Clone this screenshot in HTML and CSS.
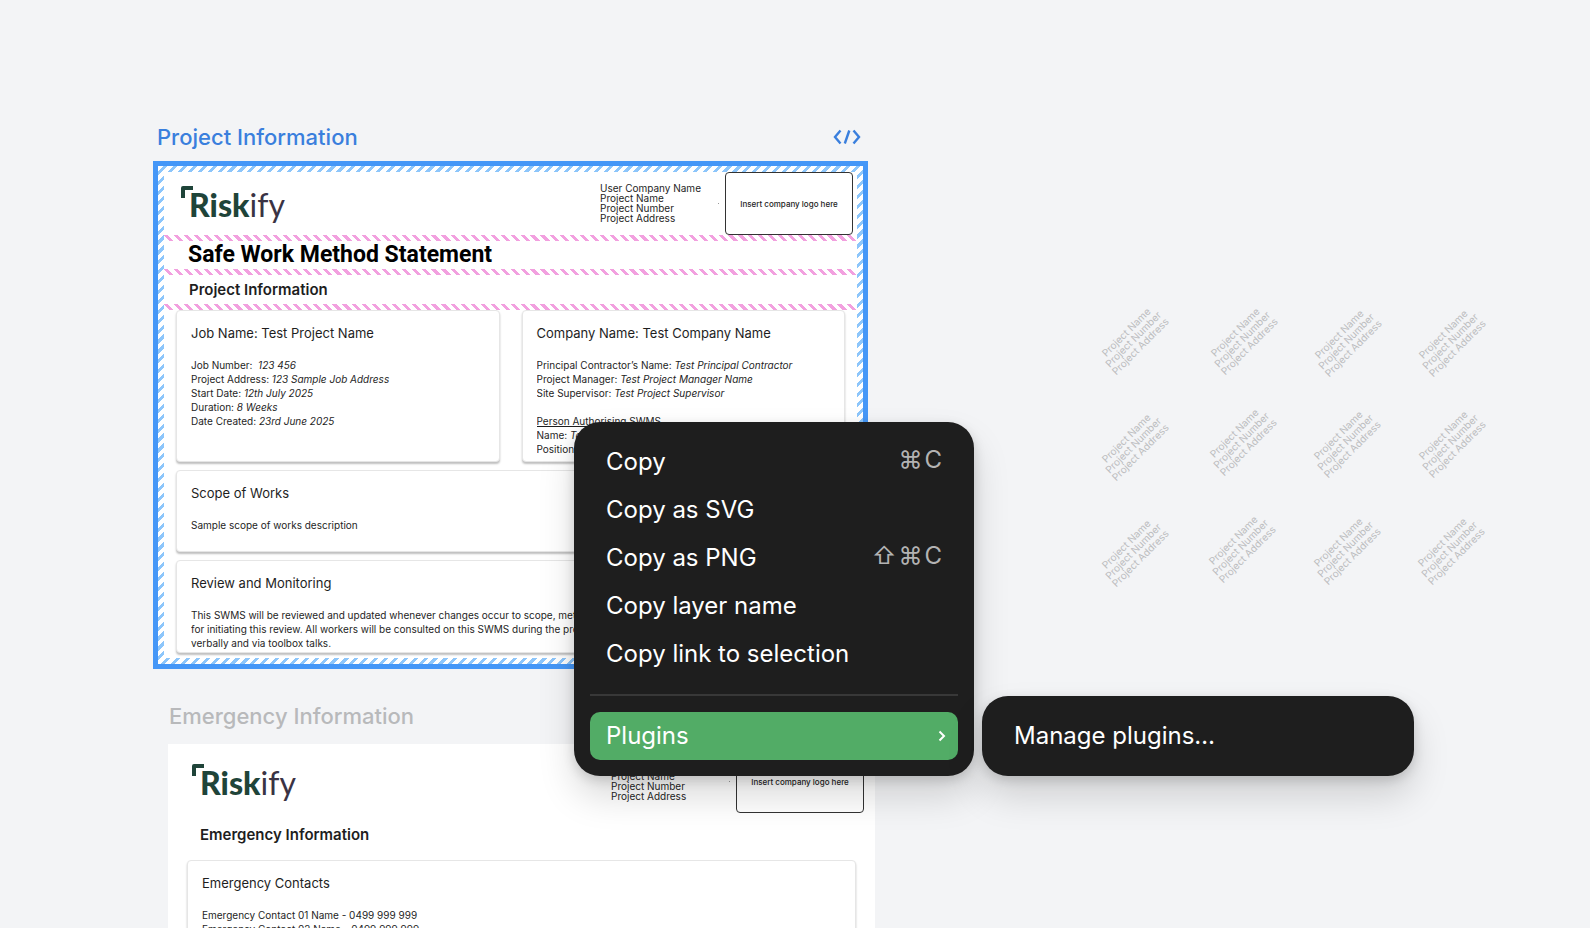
FILE: index.html
```html
<!DOCTYPE html>
<html lang="en">
<head>
<meta charset="utf-8">
<title>Design canvas</title>
<link rel="stylesheet" href="styles.css">
</head>
<body>
<main class="canvas">

  <section class="frame frame-project">
    <header class="frame-label frame-label-active">
      <span>Project Information</span>
      <svg class="dev-icon" viewBox="0 0 28 16" aria-hidden="true"><path d="M7.500 1.500 2 8l5.500 6.500M20.500 1.500 26 8l-5.500 6.500M16.300 1.500 11.800 14.500"/></svg>
    </header>
    <article class="sheet sheet-selected">
      <div class="sheet-body">
        <div class="letterhead">
          <div class="logo">
            <svg class="logo-mark" viewBox="0 0 14 14" aria-hidden="true"><path d="M2 12V2h10"/></svg>
            <span class="logo-risk">Risk</span><span class="logo-ify">ify</span>
          </div>
          <div class="meta">User Company Name<br>Project Name<br>Project Number<br>Project Address</div>
          <span class="dot"></span>
          <div class="logo-slot">Insert company logo here</div>
        </div>
        <div class="gap"></div>
        <h1 class="doc-title">Safe Work Method Statement</h1>
        <div class="gap"></div>
        <h2 class="doc-subtitle">Project Information</h2>
        <div class="gap"></div>
        <div class="cards">
          <div class="card-row">
            <section class="card">
              <h3>Job Name: Test Project Name</h3>
              <p>Job Number: &nbsp;<em>123 456</em><br>Project Address: <em>123 Sample Job Address</em><br>Start Date: <em>12th July 2025</em><br>Duration: <em>8 Weeks</em><br>Date Created: <em>23rd June 2025</em></p>
            </section>
            <section class="card">
              <h3>Company Name: Test Company Name</h3>
              <p>Principal Contractor’s Name: <em>Test Principal Contractor</em><br>Project Manager: <em>Test Project Manager Name</em><br>Site Supervisor: <em>Test Project Supervisor</em></p>
              <p class="para"><u>Person Authorising SWMS</u><br>Name: <em>Test Name</em><br>Position:</p>
            </section>
          </div>
          <section class="card card-scope">
            <h3>Scope of Works</h3>
            <p>Sample scope of works description</p>
          </section>
          <section class="card card-review">
            <h3>Review and Monitoring</h3>
            <p>This SWMS will be reviewed and updated whenever changes occur to scope, methods<br>for initiating this review. All workers will be consulted on this SWMS during the project<br>verbally and via toolbox talks.</p>
          </section>
        </div>
      </div>
    </article>
  </section>

  <section class="frame frame-emergency">
    <header class="frame-label">
      <span>Emergency Information</span>
    </header>
    <article class="sheet sheet-plain">
      <div class="letterhead">
        <div class="logo">
          <svg class="logo-mark" viewBox="0 0 14 14" aria-hidden="true"><path d="M2 12V2h10"/></svg>
          <span class="logo-risk">Risk</span><span class="logo-ify">ify</span>
        </div>
        <div class="meta">User Company Name<br>Project Name<br>Project Number<br>Project Address</div>
        <span class="dot"></span>
        <div class="logo-slot">Insert company logo here</div>
      </div>
      <h2 class="doc-subtitle">Emergency Information</h2>
      <div class="cards">
        <section class="card card-contacts">
          <h3>Emergency Contacts</h3>
          <p>Emergency Contact 01 Name - 0499 999 999<br>Emergency Contact 02 Name - 0499 999 999</p>
        </section>
      </div>
    </article>
  </section>

  <p class="stamp a1">Project Name<br>Project Number<br>Project Address</p>
  <p class="stamp a2">Project Name<br>Project Number<br>Project Address</p>
  <p class="stamp a3">Project Name<br>Project Number<br>Project Address</p>
  <p class="stamp a4">Project Name<br>Project Number<br>Project Address</p>
  <p class="stamp b1">Project Name<br>Project Number<br>Project Address</p>
  <p class="stamp b2">Project Name<br>Project Number<br>Project Address</p>
  <p class="stamp b3">Project Name<br>Project Number<br>Project Address</p>
  <p class="stamp b4">Project Name<br>Project Number<br>Project Address</p>
  <p class="stamp c1">Project Name<br>Project Number<br>Project Address</p>
  <p class="stamp c2">Project Name<br>Project Number<br>Project Address</p>
  <p class="stamp c3">Project Name<br>Project Number<br>Project Address</p>
  <p class="stamp c4">Project Name<br>Project Number<br>Project Address</p>

  <div class="menus">
    <div class="menu menu-main" role="menu">
      <button class="item" role="menuitem">Copy<span class="keys"><kbd>⌘</kbd><kbd>C</kbd></span></button>
      <button class="item" role="menuitem">Copy as SVG</button>
      <button class="item" role="menuitem">Copy as PNG<span class="keys"><kbd>⇧</kbd><kbd>⌘</kbd><kbd>C</kbd></span></button>
      <button class="item" role="menuitem">Copy layer name</button>
      <button class="item" role="menuitem">Copy link to selection</button>
      <hr class="rule">
      <button class="item item-active" role="menuitem">Plugins<svg class="chevron" viewBox="0 0 8 12" aria-hidden="true"><path d="M1.500 1.500 6 6l-4.500 4.500"/></svg></button>
    </div>
    <div class="menu menu-sub" role="menu">
      <button class="item" role="menuitem">Manage plugins…</button>
    </div>
  </div>
</main>
</body>
</html>
```
FILE: styles.css
```css
* { box-sizing: border-box; }

body {
  margin: 0;
  font-family: Inter, "Liberation Sans", sans-serif;
  color: #1e1e1e;
}

h1, h2, h3, p { margin: 0; }

.canvas {
  position: relative;
  height: 100vh;
  overflow: hidden;
  background: #f3f4f6;
}

/* Artboards on the free canvas */
.frame { position: absolute; }
.frame-project { left: 153px; top: 121px; width: 715px; }
.frame-emergency { left: 168px; top: 700px; width: 707px; }

.frame-label {
  display: flex;
  justify-content: space-between;
  height: 40px;
  padding: 0 4px;
  font-size: 22px;
  line-height: 32px;
  font-weight: 500;
  color: #b8b9bb;
}
.frame-emergency .frame-label { height: 44px; padding: 0 1px; }
.frame-label-active { color: #3a7fdd; }

.dev-icon { width: 28px; height: 16px; margin: 8px 3px; }
.dev-icon path { fill: none; stroke: #3a7fdd; stroke-width: 2.4; }

.sheet { background: #fff; }
.sheet-selected {
  border: 5px solid #4597f7;
  padding: 6px;
  background: repeating-linear-gradient(135deg, #fff 0 4px, #8dc6fb 4px 7px);
}
.sheet-body { background: #fff; padding-bottom: 5px; }
.sheet-plain { height: 300px; padding: 6px 7px; }

.letterhead { display: flex; height: 63px; padding-right: 4px; }

.logo {
  position: relative;
  display: flex;
  margin-right: auto;
  padding: 13px 0 0 25px;
  font-family: Lato, sans-serif;
  font-size: 32px;
  line-height: 40px;
}
.logo-mark { position: absolute; left: 17px; top: 14px; width: 14px; height: 14px; }
.logo-mark path { fill: none; stroke: #1f4439; stroke-width: 4; stroke-linejoin: round; }
.logo-risk { font-weight: 900; color: #1f4439; }
.logo-ify { color: #3a3344; }

.meta { padding-top: 11px; width: 117px; font-size: 10px; line-height: 10px; }
.dot { width: 1px; height: 1px; margin: 31px 6px 0 1px; background: #999; }
.logo-slot {
  display: flex;
  align-items: center;
  justify-content: center;
  width: 128px;
  border: 1px solid #333;
  border-radius: 4px;
  font-size: 8px;
  font-weight: 500;
}

.gap {
  height: 6px;
  background: repeating-linear-gradient(45deg, #fff 0 4px, #f2a0df 4px 7px);
}
.doc-title {
  padding-left: 24px;
  font-family: Roboto, sans-serif;
  font-size: 23px;
  line-height: 28px;
  font-weight: 700;
  color: #000;
}
.doc-subtitle { padding-left: 25px; font-size: 15px; line-height: 29px; font-weight: 600; }
.sheet-plain .doc-subtitle { margin-top: 7px; }

.cards { display: flex; flex-direction: column; gap: 8px; padding: 0 12px; }
.sheet-plain .cards { padding-top: 11px; }
.card-row { display: grid; grid-template-columns: 1fr 1fr; gap: 22px; }
.card {
  padding: 14px 14px 8px;
  border: 1px solid #e6e6e6;
  border-radius: 4px;
  background: #fff;
  box-shadow: 0 2px 2px #00000040;
}
.card h3 { font-size: 13px; line-height: 16px; font-weight: 400; }
.card p { padding-top: 17px; font-size: 10px; line-height: 14px; white-space: nowrap; overflow: hidden; }
.card .para { padding-top: 14px; }
.card-row .card { height: 152px; }
.card-scope { height: 82px; }
.card-review { height: 93px; }
.card-contacts { height: 200px; }

/* Rotated placeholder text */
.stamp {
  position: absolute;
  width: 76px;
  font-size: 10px;
  line-height: 10px;
  color: #bcbdbf;
  text-align: center;
  white-space: nowrap;
  transform: rotate(-45deg);
}
.a1 { left: 1095px; top: 324px; }
.a2 { left: 1204px; top: 324px; }
.a3 { left: 1308px; top: 326px; }
.a4 { left: 1412px; top: 326px; }
.b1 { left: 1095px; top: 430px; }
.b2 { left: 1203px; top: 425px; }
.b3 { left: 1307px; top: 427px; }
.b4 { left: 1412px; top: 427px; }
.c1 { left: 1095px; top: 536px; }
.c2 { left: 1202px; top: 532px; }
.c3 { left: 1307px; top: 534px; }
.c4 { left: 1411px; top: 534px; }

/* Context menu */
.menus {
  position: absolute;
  left: 574px;
  top: 422px;
  display: flex;
  align-items: flex-end;
  gap: 8px;
}
.menu {
  padding: 16px;
  border-radius: 26px;
  background: #1e1e1e;
  box-shadow: 0 20px 36px #00000026, 0 4px 12px #00000026;
}
.menu-main { width: 400px; }
.menu-sub { width: 432px; }
.item {
  display: flex;
  align-items: center;
  width: 100%;
  height: 48px;
  padding: 0 16px;
  border: 0;
  border-radius: 10px;
  background: none;
  color: #fff;
  font: 400 24px/32px Inter, sans-serif;
  text-align: left;
}
.item-active { padding-right: 12px; background: #52ac66; }
.keys { display: flex; gap: 2px; margin-left: auto; padding-bottom: 4px; color: #b3b3b3; }
.keys kbd { font: inherit; }
.rule { margin: 16px 0; border: 0; border-top: 2px solid #383838; }
.chevron { width: 8px; height: 12px; margin-left: auto; }
.chevron path { fill: none; stroke: #fff; stroke-width: 2; }
```
